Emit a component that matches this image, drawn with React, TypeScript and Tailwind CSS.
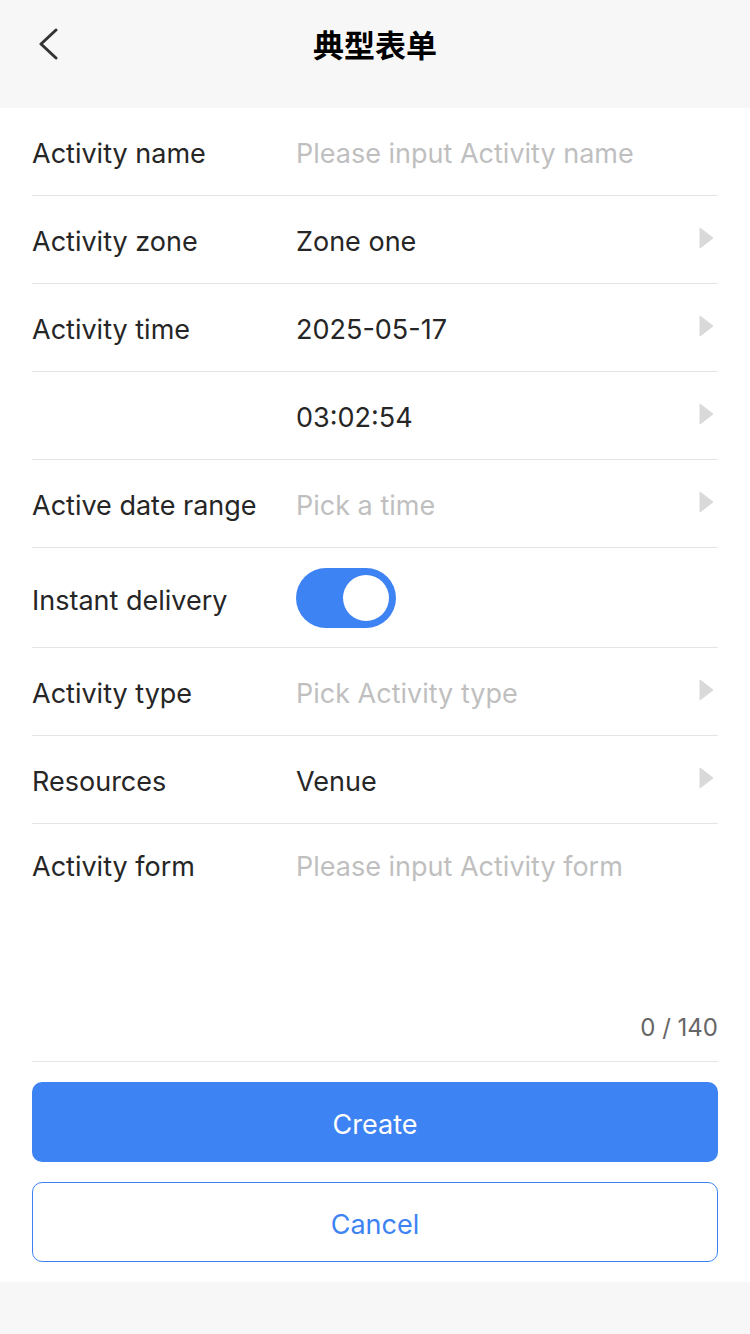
import React from 'react';

const font = { fontFamily: 'Inter, "Noto Sans CJK SC", sans-serif' };

const Arrow = () => (
  <svg width="16" height="24" viewBox="0 0 16 24" className="shrink-0">
    <path d="M2 2 L15 12 L2 22 Z" fill="#d9d9d9" strokeLinejoin="round" stroke="#d9d9d9" strokeWidth="1" />
  </svg>
);

type RowProps = { label?: string; value: string; placeholder?: boolean; arrow?: boolean };

const Row: React.FC<RowProps> = ({ label, value, placeholder, arrow }) => (
  <div className="flex items-center h-[88px] border-b border-[#e5e5e5]">
    <div className="w-[264px] text-[27px] text-[#262626] pt-[6px]">{label}</div>
    <div className={`flex-1 text-[27px] pt-[6px] ${placeholder ? 'text-[#bfbfbf]' : 'text-[#262626]'}`}>{value}</div>
    {arrow && <div className="pr-[4px] pb-[4px]"><Arrow /></div>}
  </div>
);

const App: React.FC = () => {
  return (
    <div className="min-h-[1334px] bg-[#f7f7f7]" style={font}>
      <div className="relative h-[108px] flex items-start justify-center pt-[22px]">
        <svg className="absolute left-[36px] top-[28px]" width="24" height="32" viewBox="0 0 24 32">
          <path d="M20 2 L5 16 L20 30" fill="none" stroke="#333" strokeWidth="3" strokeLinecap="round" strokeLinejoin="round" />
        </svg>
        <h1 className="text-[31px] font-bold text-black leading-[44px]" style={{ fontFamily: '"Noto Sans CJK SC", sans-serif' }}>典型表单</h1>
      </div>

      <div className="bg-white px-[32px] pb-[20px]">
        <Row label="Activity name" value="Please input Activity name" placeholder />
        <Row label="Activity zone" value="Zone one" arrow />
        <Row label="Activity time" value="2025-05-17" arrow />
        <Row value="03:02:54" arrow />
        <Row label="Active date range" value="Pick a time" placeholder arrow />
        <div className="flex items-center h-[100px] border-b border-[#e5e5e5]">
          <div className="w-[264px] text-[27px] text-[#262626] pt-[8px]">Instant delivery</div>
          <div className="w-[100px] h-[60px] rounded-full bg-[#3e83f3] flex items-center justify-end pr-[7px]">
            <div className="w-[46px] h-[46px] rounded-full bg-white" />
          </div>
        </div>
        <Row label="Activity type" value="Pick Activity type" placeholder arrow />
        <Row label="Resources" value="Venue" arrow />
        <div className="h-[238px] border-b border-[#e5e5e5] flex flex-col">
          <div className="flex pt-[23px]">
            <div className="w-[264px] text-[27px] text-[#262626]">Activity form</div>
            <div className="flex-1 text-[27px] text-[#bfbfbf]">Please input Activity form</div>
          </div>
          <div className="mt-auto mb-[15px] text-right text-[24px] text-[#666]">0 / 140</div>
        </div>
        <div className="flex flex-col gap-[20px] pt-[20px]">
          <button className="h-[80px] rounded-[10px] bg-[#3e83f3] text-white text-[27px] pt-[6px]">Create</button>
          <button className="h-[80px] rounded-[10px] border border-[#3e83f3] bg-white text-[#3e83f3] text-[27px] pt-[6px]">Cancel</button>
        </div>
      </div>
    </div>
  );
};

export default App;
